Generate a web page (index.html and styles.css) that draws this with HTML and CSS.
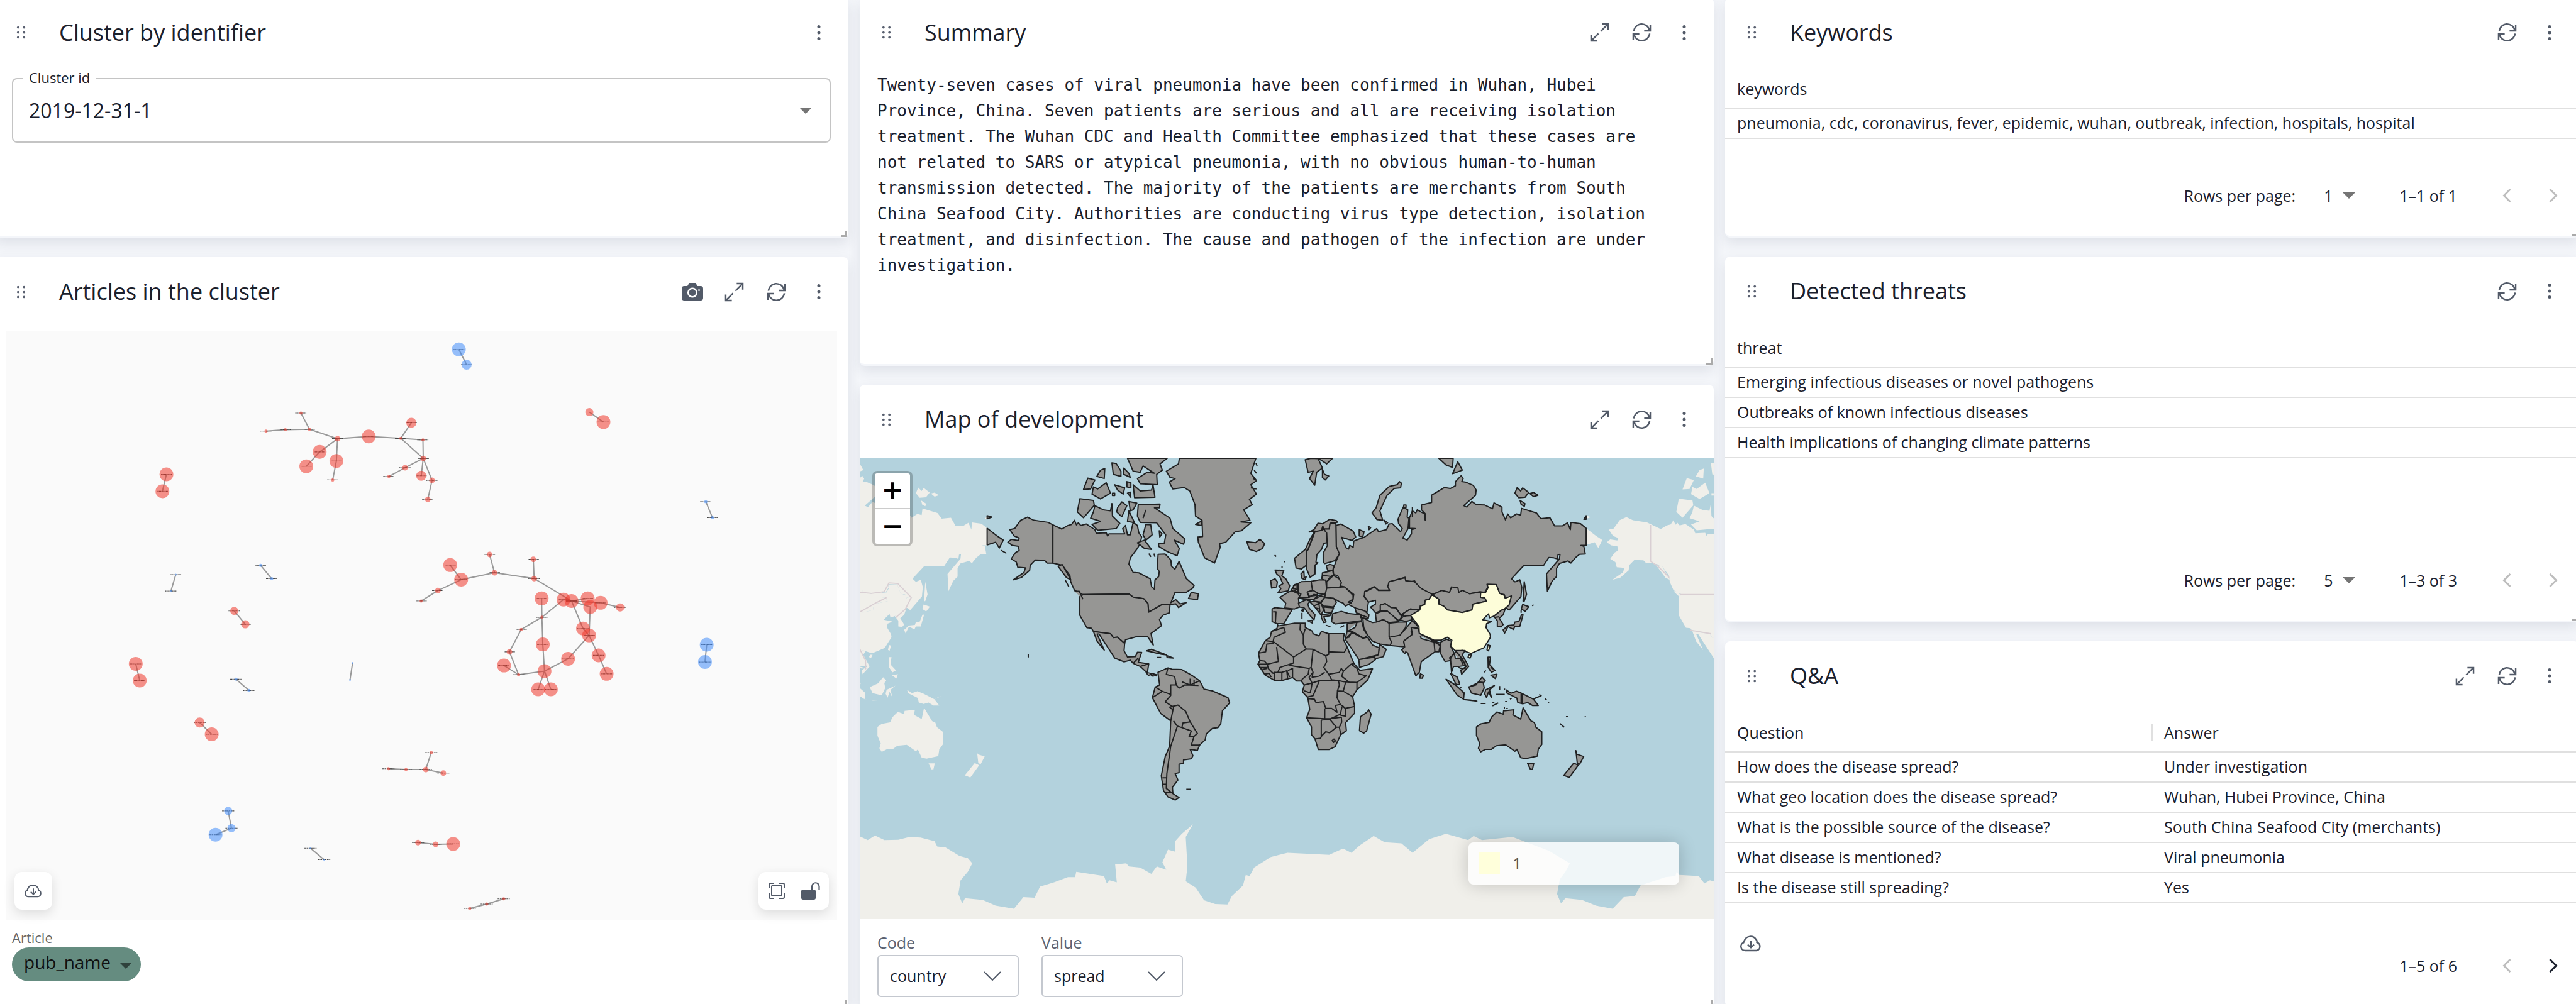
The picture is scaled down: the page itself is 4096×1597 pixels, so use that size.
FILE: index.html
```html
<!DOCTYPE html>
<html lang="en">
<head>
<meta charset="utf-8">
<title>Cluster dashboard</title>
<link rel="stylesheet" href="styles.css">
</head>
<body>
<svg class="sprite" aria-hidden="true">
  <symbol id="i-drag" viewBox="0 0 16 22"><g fill="currentColor"><circle cx="3" cy="2.500" r="2"/><circle cx="13" cy="2.500" r="2"/><circle cx="3" cy="11" r="2"/><circle cx="13" cy="11" r="2"/><circle cx="3" cy="19.500" r="2"/><circle cx="13" cy="19.500" r="2"/></g></symbol>
  <symbol id="i-more" viewBox="0 0 6 26"><g fill="currentColor"><circle cx="3" cy="3.500" r="2.500"/><circle cx="3" cy="13" r="2.500"/><circle cx="3" cy="22.500" r="2.500"/></g></symbol>
  <symbol id="i-expand" viewBox="0 0 32 32"><path d="M18 14 30 2M20 2h10v10M14 18 2 30M2 20v10h10" fill="none" stroke="currentColor" stroke-width="2.500"/></symbol>
  <symbol id="i-refresh" viewBox="0 0 32 32"><path d="M3 14A13 13 0 0 1 28.500 12M30 3v10.500H20M29 18A13 13 0 0 1 3.500 20M2 29V18.500h10" fill="none" stroke="currentColor" stroke-width="2.500"/></symbol>
  <symbol id="i-camera" viewBox="0 0 34 30"><path fill="currentColor" fill-rule="evenodd" d="M12 1h10l3 5h5q4 0 4 4v15q0 4-4 4H4q-4 0-4-4V10q0-4 4-4h5zM17 8.500a8 8 0 1 0 .01 0zM17 11a5.500 5.500 0 1 1-.01 0zM27.500 11a1.500 1.500 0 1 0 .01 0z"/></symbol>
  <symbol id="i-cloud" viewBox="0 0 34 28"><path d="M8 26a6.500 6.500 0 0 1-2.500-12.600A5 5 0 0 1 7 9.500 10 9 0 0 1 25 8a5 5 0 0 1 1.500 5A6.700 6.700 0 0 1 26 26zM17 10v11M12 16.500l5 5 5-5" fill="none" stroke="currentColor" stroke-width="2.400" stroke-linejoin="round"/></symbol>
  <symbol id="i-fit" viewBox="0 0 26 26"><path d="M1 9V3q0-2 2-2h6M17 1h6q2 0 2 2v6M25 17v6q0 2-2 2h-6M9 25H3q-2 0-2-2v-6M6 5h14q1 0 1 1v14q0 1-1 1H6q-1 0-1-1V6q0-1 1-1z" fill="none" stroke="currentColor" stroke-width="2"/></symbol>
  <symbol id="i-unlock" viewBox="0 0 30 28"><path fill="currentColor" d="M3 12h17q3 0 3 3v10q0 3-3 3H3q-3 0-3-3V15q0-3 3-3z"/><path d="M17 13V7a5.500 5.500 0 0 1 11.500 0v6" fill="none" stroke="currentColor" stroke-width="2.200"/></symbol>
  <symbol id="i-caret" viewBox="0 0 20 10"><path d="M0 0h20L10 10z" fill="currentColor"/></symbol>
  <symbol id="i-chev" viewBox="0 0 28 15"><path d="M1 1 14 14 27 1" fill="none" stroke="currentColor" stroke-width="2"/></symbol>
  <symbol id="i-prev" viewBox="0 0 14 22"><path d="M12.500 1 2.500 11l10 10" fill="none" stroke="currentColor" stroke-width="3"/></symbol>
  <symbol id="i-next" viewBox="0 0 14 22"><path d="M1.500 1l10 10-10 10" fill="none" stroke="currentColor" stroke-width="3"/></symbol>
  <symbol id="i-grip" viewBox="0 0 10 10"><path d="M9 0v9H0" fill="none" stroke="currentColor" stroke-width="4"/></symbol>
</svg>

<main class="board">
  <div class="column">
    <section class="card grow-s">
      <header class="card-head">
        <svg class="drag"><use href="#i-drag"/></svg>
        <h2>Cluster by identifier</h2>
        <button class="tool" aria-label="More"><svg class="i-more"><use href="#i-more"/></svg></button>
      </header>
      <div class="field-body">
        <div class="outlined">
          <label for="cluster">Cluster id</label>
          <select id="cluster"><option>2019-12-31-1</option></select>
          <svg class="caret"><use href="#i-caret"/></svg>
        </div>
      </div>
      <svg class="grip"><use href="#i-grip"/></svg>
    </section>

    <section class="card grow-xl">
      <header class="card-head">
        <svg class="drag"><use href="#i-drag"/></svg>
        <h2>Articles in the cluster</h2>
        <button class="tool" aria-label="Snapshot"><svg class="i-camera"><use href="#i-camera"/></svg></button>
        <button class="tool" aria-label="Expand"><svg class="i-32"><use href="#i-expand"/></svg></button>
        <button class="tool" aria-label="Refresh"><svg class="i-32"><use href="#i-refresh"/></svg></button>
        <button class="tool" aria-label="More"><svg class="i-more"><use href="#i-more"/></svg></button>
      </header>
      <div class="graph">
        <svg viewBox="10 564 1420 1008" role="img" aria-label="Article graph">
          <defs>
            <marker id="lab" markerUnits="userSpaceOnUse" markerWidth="44" markerHeight="8" refX="20" refY="3" viewBox="0 0 44 8"><path d="M0 3H40" class="tiny"/></marker>
            <marker id="lab2" markerUnits="userSpaceOnUse" markerWidth="24" markerHeight="8" refX="11" refY="3" viewBox="0 0 24 8"><path d="M0 3H22" class="tiny"/></marker>
          </defs>
          <g transform="translate(0 560) scale(.4847 .3954)">
            <path class="edge" d="M938,444L1006,438L1091,436L1190,477L1300,467L1413,475L1491,482L1492,562L1428,602L1371,640M1061,366L1091,436M1190,477L1127,534L1080,596M1190,477L1186,573L1173,655M1413,475L1450,408M1413,475L1492,562L1485,637M1492,562L1523,657L1508,739M587,631L573,704M620,1064L603,1135M919,1024L958,1082M826,1221L865,1279M479,1450L493,1522M1243,1446L1234,1519M832,1516L878,1565"/>
            <path class="node n5" d="M1127,534h0M1080,596h0M1300,467h0M1186,573h0M587,631h0M573,704h0M479,1450h0M493,1522h0"/>
            <path class="node n4" d="M1450,408h0M1485,637h0"/>
            <path class="node n3" d="M826,1221h0M865,1279h0"/>
            <path class="node n2" d="M1190,477h0M1492,562h0M1523,657h0M1508,739h0M1428,602h0"/>
            <path class="node n1" d="M938,444h0M1006,438h0M1091,436h0M1061,366h0M1173,655h0M1413,475h0M1491,482h0M1371,640h0"/>
            <path class="node n1 blue" d="M919,1024h0M958,1082h0M832,1516h0M878,1565h0"/>
            <path class="node n0 blue" d="M620,1064h0M603,1135h0M1243,1446h0M1234,1519h0"/>
          </g>
          <g transform="translate(700 560) scale(.4911 .3954)">
            <path class="edge" d="M171,91L198,157M625,362L674,405M1030,749L1053,818M1033,1367L1027,1442M141,1023L179,1086L295,1056L433,1081L563,1178M40,1178L98,1133L179,1086M278,977L295,1056M430,998L433,1081M459,1167L460,1248L463,1366L469,1481L447,1560M460,1248L535,1172L563,1178L619,1167M563,1178L664,1186L732,1206M563,1178L628,1204L624,1327M563,1178L603,1297L624,1327L551,1428L469,1481L379,1497L328,1457M379,1497L347,1398L388,1301L460,1248M624,1327L657,1413L685,1493M469,1481L491,1560"/>
            <path class="node n5" d="M141,1023h0M459,1167h0M535,1172h0M619,1167h0M463,1366h0M551,1428h0M328,1457h0M447,1560h0M603,1297h0M674,405h0"/>
            <path class="node n5" d="M179,1086h0M563,1178h0M664,1186h0M624,1327h0M469,1481h0M657,1413h0M491,1560h0"/>
            <path class="node n5" d="M628,1204h0M685,1493h0"/>
            <path class="node n3" d="M625,362h0M732,1206h0"/>
            <path class="node n2" d="M347,1398h0M98,1133h0M278,977h0M430,998h0M295,1056h0M433,1081h0"/>
            <path class="node n1" d="M40,1178h0M460,1248h0M388,1301h0M379,1497h0"/>
            <path class="node n5 blue" d="M171,91h0M1033,1367h0M1027,1442h0"/>
            <path class="node n4 blue" d="M198,157h0"/>
            <path class="node n1 blue" d="M1030,749h0M1053,818h0"/>
          </g>
          <g transform="translate(0 1130) scale(.9375 .3737)">
            <path class="edge wide" d="M364,277L386,331M708,488L740,492L776,492L786,414M776,492L808,508M416,681L422,760L393,790M566,852L591,904M762,826L794,834L826,832M856,1127L887,1107L918,1083"/>
            <path class="node n5" d="M386,331h0M826,832h0"/>
            <path class="node n4" d="M364,277h0"/>
            <path class="node n2" d="M776,492h0M808,508h0M762,826h0M794,834h0"/>
            <path class="node n1" d="M708,488h0M740,492h0M786,414h0M856,1127h0M887,1107h0M918,1083h0"/>
            <path class="node n5 blue" d="M393,790h0"/>
            <path class="node n3 blue" d="M416,681h0M422,760h0"/>
            <path class="node n0 blue" d="M566,852h0M591,904h0"/>
          </g>
        </svg>
        <div class="float left"><button aria-label="Download"><svg class="i-cloud-s"><use href="#i-cloud"/></svg></button></div>
        <div class="float right"><button aria-label="Fit"><svg class="i-fit"><use href="#i-fit"/></svg></button><button aria-label="Unlock"><svg class="i-unlock"><use href="#i-unlock"/></svg></button></div>
      </div>
      <div class="chip-field">
        <label for="article">Article</label>
        <div class="chip">
          <select id="article"><option>pub_name</option></select>
          <svg class="caret"><use href="#i-caret"/></svg>
        </div>
      </div>
      <svg class="grip"><use href="#i-grip"/></svg>
    </section>
  </div>

  <div class="column">
    <section class="card grow-m">
      <header class="card-head">
        <svg class="drag"><use href="#i-drag"/></svg>
        <h2>Summary</h2>
        <button class="tool" aria-label="Expand"><svg class="i-32"><use href="#i-expand"/></svg></button>
        <button class="tool" aria-label="Refresh"><svg class="i-32"><use href="#i-refresh"/></svg></button>
        <button class="tool" aria-label="More"><svg class="i-more"><use href="#i-more"/></svg></button>
      </header>
      <p class="summary">Twenty-seven cases of viral pneumonia have been confirmed in Wuhan, Hubei
Province, China. Seven patients are serious and all are receiving isolation
treatment. The Wuhan CDC and Health Committee emphasized that these cases are
not related to SARS or atypical pneumonia, with no obvious human-to-human
transmission detected. The majority of the patients are merchants from South
China Seafood City. Authorities are conducting virus type detection, isolation
treatment, and disinfection. The cause and pathogen of the infection are under
investigation.</p>
      <svg class="grip"><use href="#i-grip"/></svg>
    </section>

    <section class="card grow-l">
      <header class="card-head">
        <svg class="drag"><use href="#i-drag"/></svg>
        <h2>Map of development</h2>
        <button class="tool" aria-label="Expand"><svg class="i-32"><use href="#i-expand"/></svg></button>
        <button class="tool" aria-label="Refresh"><svg class="i-32"><use href="#i-refresh"/></svg></button>
        <button class="tool" aria-label="More"><svg class="i-more"><use href="#i-more"/></svg></button>
      </header>
      <div class="map">
        <svg viewBox="1470 784 1460 788" preserveAspectRatio="xMidYMid slice" role="img" aria-label="World map">
          <defs>
            <g id="world">
              <g transform="translate(1460 640) scale(.4847 .3571)">
                <path d="M702,722L685,710L635,700L612,685L588,700L567,740L550,745L565,775L583,785L580,797L555,792L543,805L558,820L580,825L583,845L570,855L555,885L573,900L578,925L605,928L600,950L562,985L590,975L620,940L622,915L640,890L672,892L682,905L702,905Z"/>
                <path d="M702,722L733,742L755,725L768,720L778,700L785,722L792,712L800,725L820,718L850,745L855,762L890,760L895,775L900,765L955,765L948,740L958,725L965,770L975,770L985,710L1000,725L1005,760L1015,780L1010,810L1000,835L975,880L970,910L985,950L1005,952L1045,980L1050,1018L1060,1030L1062,985L1075,970L1077,945L1070,930L1073,863L1098,862L1118,890L1120,920L1132,935L1147,897L1172,978L1200,1012L1195,1025L1170,1047L1132,1047L1118,1095L1135,1080L1150,1100L1172,1095L1145,1118L1135,1100L1115,1103L1088,1103L1040,1140L1037,1098L1022,1075L985,1068L970,1053L808,1056L778,1035L765,995L762,965L735,915L702,905Z"/>
                <path d="M808,1056L970,1053L985,1068L1022,1075L1037,1098L1040,1140L1088,1103L1115,1103L1113,1143L1090,1155L1078,1175L1085,1205L1048,1242L1056,1298L1035,1255L1003,1255L985,1262L958,1272L955,1290L930,1260L915,1262L905,1243L845,1233L838,1217L822,1215L797,1155V1065Z"/>
                <path d="M845,1233L905,1243L915,1262L930,1260L955,1290L953,1325L965,1355L993,1353L1000,1332L1015,1333L1008,1360L1003,1380L1040,1388L1035,1430L1070,1440L1055,1447L1030,1425L1010,1400L985,1385L975,1370L953,1378L920,1360L865,1245L858,1245L883,1322L858,1280ZM985,1385L1003,1360M1010,1400L1040,1388"/>
                <path d="M1190,1045L1215,1052L1212,1080L1180,1075ZM1032,1325L1050,1318L1103,1345L1085,1342ZM1103,1348L1127,1360L1105,1358ZM1068,1357h16M615,1340V1357M520,845l16,12zM720,920L735,912L765,985L750,975ZM745,985L758,1018M778,1040L795,1040L808,1078"/>
                <path d="M1003,625L1080,622L1078,640L1060,640L1115,690L1125,740L1168,790L1163,815L1130,795L1148,835L1140,870L1105,850L1075,825L1075,812L1095,810L1100,770L1068,712L1010,710L1000,680ZM850,630L880,650L905,655L910,620L912,680L938,715L925,740L860,748L840,720L870,705L835,690L845,660ZM797,597L845,605L848,628L810,688L788,660ZM930,640L945,612L963,630L945,683L927,660ZM970,610L998,618L985,650L975,655ZM970,655L990,712L965,705ZM1030,720L1047,722L1052,770L1030,795L1020,770ZM1000,808L1025,795L1050,840L1025,835ZM1030,650L1020,690M1077,750l10,15l-8,15zM1040,860l8,15M1058,860l4,15"/>
                <path d="M825,498L850,507L835,550L810,552ZM845,540L860,550L890,520L905,570L870,598L840,575ZM920,530L955,545L950,575L930,555ZM985,530L1010,560L1050,555L1055,530L1062,590L990,592ZM965,403H1105L1080,430L1088,460L1068,480L1070,530L1010,525L1000,500L1035,470L1060,475L1020,440L1010,470L985,465ZM910,425L925,428L942,465L942,490L915,480ZM870,460L885,452L883,500L857,490ZM952,450L970,475L975,495L952,480ZM963,515L977,520L977,545L963,540ZM965,570l10,-5l2,25zM912,570h8v12h-8z"/>
                <path d="M1148,403L1145,430L1102,465L1115,495L1133,500L1112,517L1125,550L1165,543L1185,560L1203,625L1205,680L1228,700L1230,778L1213,780L1215,805L1237,880L1272,905L1292,830L1290,812L1312,805L1345,755L1367,750L1400,712L1365,708L1397,700L1375,650L1405,625L1395,600L1420,575L1400,530L1420,510L1400,475L1418,403ZM1205,720L1225,705V725ZM1418,425l4,15M1412,460l8,15M1408,500l12,8M1400,545l20,5"/>
                <path d="M470,738L500,770L527,795L513,833L500,805L470,818ZM470,678L487,685L470,693Z"/>
              </g>
              <g transform="translate(2180 640) scale(.4911 .3571)">
                <path d="M230,718L272,752L281,780L268,797L232,782L240,810L249,835L256,838L260,820L272,830L274,800L292,790L310,782L354,740L360,755L388,745L397,718L408,716L437,755L443,740L430,715L428,695L446,637L462,650L460,685L466,690L463,740L445,785L460,795L475,765L475,745L488,740L468,738L468,688L478,655L490,665L495,650L510,662L522,670L520,695L524,700L524,670L510,650L510,627L545,615L545,580L590,543L610,548L628,535L628,515L648,487L655,500L650,515L665,518L690,533L700,555L698,580L657,630L668,637L685,610L700,625L730,627L757,645L762,617L790,637L790,660L802,698L810,670L820,688L840,670L855,675L858,643L910,665L925,692L957,688L973,727L1000,727L1018,712L1028,745L1030,710L1063,716L1083,738V820L1065,820L1075,825L1080,862L1060,863L1045,880L1030,905L1020,895L990,907L980,930V970L965,990L948,1040L945,957L990,885L992,863L985,865L983,885L970,880L953,878L934,918L865,918L823,980L835,995L852,985L859,1020L856,1065L815,1130L803,1118L812,1100L822,1067L800,1072L798,1056L782,1052L770,1008L738,1006L740,1022L730,1045L713,1042L676,1052L650,1038L637,1048L635,1025L615,1020L608,1045L580,1038L548,1055L535,1052L510,1032L504,1032L486,990L470,995L453,990V973L397,996V1035L360,1035L345,1018L318,1038L310,1065L325,1092L320,1140L300,1128L282,1122L255,1103L270,1087L274,1055L240,1018L228,1015L230,1000L218,965L204,960L202,935L210,905L223,862L213,825L212,725Z"/>
                <path d="M338,665L352,640L365,580L398,538L425,530L433,515L440,522L437,545L415,548L390,580L365,655L375,700L355,697ZM105,410L125,403L150,405L165,450L145,470L138,532L120,500L133,465L115,470ZM150,403H200L180,430ZM165,455L172,480L187,488L175,507L165,495ZM570,403H620L618,447L595,435ZM636,420L652,460L618,477ZM843,543L855,560L862,545L883,567L870,590L848,592L835,570ZM887,572L900,567L915,580L900,587ZM853,605L870,620L868,633L857,625ZM1083,678V695H1075ZM293,745L310,755L305,780L293,775ZM325,730L333,735L327,745ZM448,627h8v12h-8zM380,700l12,12l-6,6zM478,635V685"/>
              </g>
              <g transform="translate(2130 860) scale(.33333)">
                <path d="M250,285L305,240L330,185L355,145L325,150L350,138L370,105L395,108L430,85L465,92L470,100L432,105L428,135L400,135L395,120L388,142L350,155L320,240L312,245L312,320L285,340L258,335Z"/>
                <path d="M355,148L388,142L400,135L415,155L418,205L400,208L388,240L365,265L360,305L370,308L355,320L355,365L330,383L310,335L312,250L320,240Z"/>
                <path d="M400,135L428,135L432,108L462,105L464,225L480,262L458,297L405,312L397,305V258L418,220L415,155Z"/>
                <path d="M413,325L430,316L452,322L446,348L420,347ZM393,360L415,355L446,348L450,372L435,378L392,372ZM392,372L435,378L415,405L390,390Z"/>
                <path d="M415,405L450,373L478,390L490,410L482,432L415,438ZM335,403L380,395L410,397L415,450L405,470L370,465L342,450ZM268,415L285,405L335,403L342,450L315,458L325,485L280,490L268,465ZM283,365L298,350L300,385L310,380L305,395L288,388ZM232,450L250,420L268,415L265,465ZM245,425l18,-5v25l-20,-5zM175,485L220,458L245,448L283,468L270,490L275,535L250,545L200,540L205,515Z"/>
                <path d="M135,545L150,538L238,548L195,620L160,620L135,610ZM140,560L155,560L152,612M270,515L310,498L330,505L318,520L325,540L355,575L350,600L335,585L300,540L275,535ZM318,605L342,603L340,617ZM288,565V595M285,552l10,-5l-2,12z"/>
                <path d="M275,490L325,485L350,470L370,475L350,495L310,498ZM315,458L345,450L370,465L360,475L325,480ZM350,495L385,478L405,485L385,510L350,505ZM370,475L405,470V485L385,478ZM385,515L405,485L450,490L465,510L450,535L400,530ZM400,535L450,540L440,565L405,562ZM330,510L350,505L385,515L400,550L385,575L350,530ZM350,530L375,515L380,560M360,540l20,5M388,575L440,568L432,580L400,585L412,612L400,615L388,590ZM410,628l24,8M485,640l20,-10"/>
                <path d="M415,438L508,432L550,475L550,495L525,510L540,515L510,530L500,515L480,508L450,490L405,485L410,460ZM150,345L195,347L185,375L205,390L225,425L218,452L165,462L180,440L170,428L190,415L175,380L158,365ZM128,400L150,390L162,405L158,432L132,438ZM5,200L50,205L72,187L97,210L85,235L55,250L20,240L12,220ZM148,268l8,8M198,298v8M186,325v10"/>
                <path d="M445,570L490,557L525,568L590,575L595,605L520,615L460,622L440,610ZM560,540L610,555L632,575L628,595L590,590L585,570L567,565ZM590,575L630,590"/>
                <path d="M628,450L660,432L680,450L738,450L728,430L735,405L817,385L820,400L865,405L900,440L957,470L940,495L920,500L918,522L895,530L893,550L845,545L805,570L795,575L770,540L745,538L715,517L690,525L690,555L665,565L640,535L665,520V500L630,510L608,480L610,455Z"/>
                <path d="M665,570L690,560L725,555L760,585L785,610L735,615L705,600L670,612ZM690,555V525L715,517L745,538L770,540L800,585L785,605L760,585L725,555ZM805,570L845,545L893,550L850,578L810,582ZM790,600L810,582L850,578L853,600L820,610ZM795,575l25,10"/>
                <path d="M600,590L650,615L670,612L705,600L735,618V690L748,715L740,732L690,725L650,710L625,680L605,640ZM735,618L785,612L825,612L820,640L790,680L735,690ZM735,690L790,680L825,640L853,605L885,635L848,660L855,675L810,710L815,740L740,732L748,715Z"/>
                <path d="M520,620L595,610L605,650L625,680L605,695L545,660L520,660ZM520,660L560,640L570,615M510,695L520,660L545,660L530,690ZM510,700L545,665L600,695L625,690L650,730L685,745L680,780L620,795L580,805L550,760ZM685,725L720,752L705,790L665,800L655,790L680,780ZM580,805L660,792L665,805L630,830L583,845Z"/>
                <path d="M885,645L890,670L965,710L1000,720L990,765L970,765L900,815L890,870L872,888L830,770L820,765L815,775L800,755L815,740L810,710L855,675L848,640ZM890,670L965,705L1000,705L1033,690M895,685L900,697L965,715L990,725M965,712L1000,735L990,765L970,765ZM895,878L912,885L905,900L893,900Z"/>
                <path d="M957,472L1005,450L1045,460L1055,432L1088,437L1092,460L1112,450L1147,467L1205,458V485L1225,487L1235,505L1165,520L1160,550L1110,563L1035,550L990,520V495Z"/>
                <path class="china" d="M955,472L990,495V520L1015,530L1035,550L1110,563L1160,550L1165,520L1235,505L1225,487L1203,485L1205,462L1230,460L1243,435L1238,420L1285,420L1302,465L1327,475L1330,490L1362,478L1350,525L1290,575L1250,590L1245,570L1215,600L1260,610L1235,620L1232,640L1253,675L1255,690L1220,745L1155,773L1110,757L1080,765L1050,735L1057,705L1033,690L1000,705L965,705L890,670L888,635L845,578L893,550L895,530L918,522L920,500L940,495ZM1242,730L1253,733L1245,760L1237,755ZM1145,780L1158,780L1150,797L1140,792Z"/>
                <path d="M163,625L165,632L250,618L305,618V640L340,658L345,672L375,683L388,660L425,672L505,672L500,700L520,740L540,790L555,825L585,860L650,852L625,910L570,960L548,995L558,1045V1080L512,1128L516,1170L487,1190L458,1252L428,1266L372,1266L355,1212L337,1190V1150L312,1103L328,1060L318,1000L290,970L300,935L285,915L262,915L240,897L185,912L148,912L100,885L62,828L72,810L65,772L100,708L125,690L132,660L160,645Z"/>
                <path class="border" d="M132,660L195,640L203,665L145,690L140,712L105,708M140,712V722L108,725L102,765L65,772M145,715L245,792L310,750L295,725V680L278,650L280,620M295,680L305,645M245,792V822L175,845L165,868M158,740L167,815L110,828L95,812L72,810M310,750L345,752L335,845L325,850L245,838L220,832M345,752L410,785L425,778V672M425,765L505,768L520,740M410,785L415,815L400,845L425,880L440,908L475,912M62,828L110,828L115,850L140,875L148,870V912M68,845H110M85,855L110,850M95,880L120,875L130,895M148,870L185,870V912M185,870L210,862L215,905M210,862L225,895M215,862L240,850V897M335,845L345,870L325,895L340,925L300,935M325,850L320,880L290,905L285,915M345,870L340,895L375,890L405,870M425,880L480,870L490,850L500,865L540,828L555,825M500,865L492,890L530,920L570,922L618,888L580,878L570,850L540,828M475,912L500,918L530,920M570,922V960M340,925L378,912L475,912L480,935L470,965L500,967L512,920M378,912L345,990L315,997M340,925L335,955L330,975L300,965M500,967L548,995M470,965L468,1000L485,1035L510,1055L558,1045M485,1035L460,1040L468,1075L440,1055L410,1055L398,1020L360,1025L352,1008L318,1005M405,1055V1108L312,1103M405,1108L435,1108L485,1085L495,1040L510,1055L512,1095L485,1090M387,1115L430,1110L465,1152L430,1180L410,1175L390,1195L383,1208L355,1212M387,1115V1200M435,1108L490,1100L492,1125L480,1152L487,1190M465,1152H480M443,1220L452,1212L460,1222L450,1230Z"/>
                <path d="M588,1098L625,1072L630,1062L643,1085L620,1170L605,1182L583,1170Z"/>
              </g>
              <g transform="translate(2430 920) scale(.33333)">
                <path d="M372,402L412,370L430,365L420,395L400,412L420,445L410,457L390,455V425ZM378,408L400,405M520,342L552,353L533,377L513,365ZM515,392L522,395L505,455L480,455L472,470L445,455L427,490L420,472L445,450L475,447L480,432L500,430ZM512,370v15M568,348l8,-4M528,225L540,290L528,325L522,325Z"/>
                <path d="M100,535L130,520L155,530L150,555L170,595L145,615L150,630L122,635L97,590ZM165,595L180,585L210,620L228,655L190,660L165,660L155,690L150,620ZM175,578L225,578L210,600L243,660L207,700L203,680L230,660L205,615ZM170,595L175,620L200,620L215,650M190,660L200,670L228,670M150,695L185,715L197,750L180,755Z"/>
                <path d="M127,725L175,755L220,795L217,828L185,808ZM217,830L285,838L250,832ZM305,850h25M365,862l30,-15M365,845h10M430,840h12M455,828l8,-5M243,765L280,755L312,715L328,732L318,745L323,770L305,808L258,797ZM245,765L300,740L318,742M330,780L375,758L350,780L360,820L345,790L335,820L325,800ZM342,612L355,612L350,650L378,680L360,690L343,665ZM357,705L388,700L380,722ZM323,690l8,-10M355,665l18,10M402,760v20M383,803h45M427,773v8M210,790l8,4M198,768h8"/>
                <path d="M435,780L460,797L488,787L520,800L575,828L600,860L570,860L545,845L520,852L495,845L490,822L440,797ZM512,798V850M518,798V850M575,828L615,810L590,820ZM605,803l10,8M635,826l8,6M652,845h4M742,918h10M838,918h6M712,953L733,972"/>
                <path d="M283,970L305,955L348,947L360,920L388,893L420,905L422,888L475,882L470,908L510,930L522,872L563,940L580,948L588,972L618,995V1060L600,1085L595,1120L535,1133L510,1128L490,1085L480,1095L433,1062L385,1067L360,1085L330,1085L305,1098L293,1080L300,1055L283,1015ZM545,1157L577,1157L570,1188L560,1188ZM793,1092L797,1110L833,1122L812,1162L800,1155ZM426,868v10M436,876h8"/>
              </g>
              <g transform="translate(1460 1150) scale(.9503 .361)">
                <path d="M1295,430L1303,440L1287,498L1277,488ZM565,-21L572,-15L590,-13L610,18L622,40L630,80L645,88L673,120L676,145L663,182L660,245L655,262L645,265L634,292L632,320L622,345L618,370L605,365L610,395L607,410L593,415V432L585,435V475L578,480L583,510L573,545L574,575L585,593L578,605L565,590L557,560L553,490L560,400L568,350L570,230L552,195L537,120L542,70L550,60L547,0ZM598,554h8M525,0L530,15L538,5L545,18"/>
                <path class="border" d="M570,230L575,165L560,140L570,110V60L580,60L585,75L595,60L620,62M565,-21L562,10L577,20L580,60M622,40L605,60V30M612,35V60M590,45L605,60M542,70L555,90L570,105M537,120L555,90M575,180L568,165L583,155L597,185L605,235L592,240L590,262L582,255L575,230M590,262L607,278L603,305L612,303L618,290L605,235M612,303L607,345L622,345M582,255L570,350L563,480L562,550L574,575M555,500h8M555,530h8M560,570h12"/>
              </g>
            </g>
          </defs>
          <rect class="sea" x="1470" y="784" width="1460" height="788"/>
          <g transform="translate(1460 1150) scale(.9503 .361)"><path class="ice" d="M5,770L25,795L38,773L55,795L80,793L100,780L120,783L145,800L150,825L165,830L190,870L205,880L213,905L205,945L192,985L188,1050L195,1095L200,1070L232,1078L255,1105L288,1120L305,1065L325,1068L335,1015L360,995L385,970L398,970L400,945L450,965L455,1000L460,985L473,995L470,910L490,905L495,920L515,925L535,955L545,920L562,935L555,900L565,840L578,850V800L590,765L610,720L597,780L600,920L597,990L615,1020L630,1080L650,1098L672,1100L680,1060L700,1010L705,960L712,965L720,925L750,875L780,855L855,865L880,835L895,855L910,820L935,775L955,805L985,810L1005,855L1035,790L1065,765L1105,795L1115,775L1130,795L1185,780L1215,810L1250,845L1288,905L1280,945L1270,980L1265,1050L1272,1095L1280,1070L1310,1078L1335,1105L1365,1120L1385,1065L1405,1060L1415,1010L1460,970L1478,965L1480,945L1485,960L1520,965L1530,1000L1540,985L1560,1000V1180H0Z"/></g>
          <use class="base" href="#world" x="-1024"/>
          <use class="base" href="#world" x="1024"/>
          <path class="frontier" d="M2822 898V960L2834 968L2854 988M2873 1017H2930M2890 1078L2925 1084M1470 1013L1490 1015L1512 1012L1520 997L1535 998L1558 1022L1548 1042L1532 1056M1470 1047L1500 1030L1516 1022M1470 1110L1480 1130V1145"/>
          <use class="countries" href="#world"/>
        </svg>
        <div class="zoom"><button aria-label="Zoom in">+</button><button aria-label="Zoom out">−</button></div>
        <div class="legend"><span class="swatch"></span>1</div>
      </div>
      <div class="map-controls">
        <div class="pick"><label for="code">Code</label><div class="box"><select id="code"><option>country</option></select><svg><use href="#i-chev"/></svg></div></div>
        <div class="pick"><label for="value">Value</label><div class="box"><select id="value"><option>spread</option></select><svg><use href="#i-chev"/></svg></div></div>
      </div>
      <svg class="grip"><use href="#i-grip"/></svg>
    </section>
  </div>

  <div class="column">
    <section class="card grow-s">
      <header class="card-head">
        <svg class="drag"><use href="#i-drag"/></svg>
        <h2>Keywords</h2>
        <button class="tool" aria-label="Refresh"><svg class="i-32"><use href="#i-refresh"/></svg></button>
        <button class="tool" aria-label="More"><svg class="i-more"><use href="#i-more"/></svg></button>
      </header>
      <table>
        <thead><tr><th>keywords</th></tr></thead>
        <tbody><tr><td>pneumonia, cdc, coronavirus, fever, epidemic, wuhan, outbreak, infection, hospitals, hospital</td></tr></tbody>
      </table>
      <footer class="pager">
        <label for="rows1">Rows per page:</label>
        <div class="rows"><select id="rows1"><option>1</option></select><svg class="caret"><use href="#i-caret"/></svg></div>
        <span class="range">1–1 of 1</span>
        <button disabled aria-label="Previous page"><svg><use href="#i-prev"/></svg></button>
        <button disabled aria-label="Next page"><svg><use href="#i-next"/></svg></button>
      </footer>
      <svg class="grip"><use href="#i-grip"/></svg>
    </section>

    <section class="card grow-m2">
      <header class="card-head">
        <svg class="drag"><use href="#i-drag"/></svg>
        <h2>Detected threats</h2>
        <button class="tool" aria-label="Refresh"><svg class="i-32"><use href="#i-refresh"/></svg></button>
        <button class="tool" aria-label="More"><svg class="i-more"><use href="#i-more"/></svg></button>
      </header>
      <table>
        <thead><tr><th>threat</th></tr></thead>
        <tbody>
          <tr><td>Emerging infectious diseases or novel pathogens</td></tr>
          <tr><td>Outbreaks of known infectious diseases</td></tr>
          <tr><td>Health implications of changing climate patterns</td></tr>
        </tbody>
      </table>
      <footer class="pager">
        <label for="rows2">Rows per page:</label>
        <div class="rows"><select id="rows2"><option>5</option></select><svg class="caret"><use href="#i-caret"/></svg></div>
        <span class="range">1–3 of 3</span>
        <button disabled aria-label="Previous page"><svg><use href="#i-prev"/></svg></button>
        <button disabled aria-label="Next page"><svg><use href="#i-next"/></svg></button>
      </footer>
      <svg class="grip"><use href="#i-grip"/></svg>
    </section>

    <section class="card grow-m2">
      <header class="card-head">
        <svg class="drag"><use href="#i-drag"/></svg>
        <h2>Q&amp;A</h2>
        <button class="tool" aria-label="Expand"><svg class="i-32"><use href="#i-expand"/></svg></button>
        <button class="tool" aria-label="Refresh"><svg class="i-32"><use href="#i-refresh"/></svg></button>
        <button class="tool" aria-label="More"><svg class="i-more"><use href="#i-more"/></svg></button>
      </header>
      <table class="two">
        <thead><tr><th><span class="divided">Question</span></th><th>Answer</th></tr></thead>
        <tbody>
          <tr><td>How does the disease spread?</td><td>Under investigation</td></tr>
          <tr><td>What geo location does the disease spread?</td><td>Wuhan, Hubei Province, China</td></tr>
          <tr><td>What is the possible source of the disease?</td><td>South China Seafood City (merchants)</td></tr>
          <tr><td>What disease is mentioned?</td><td>Viral pneumonia</td></tr>
          <tr><td>Is the disease still spreading?</td><td>Yes</td></tr>
        </tbody>
      </table>
      <footer class="pager">
        <button class="save" aria-label="Download"><svg><use href="#i-cloud"/></svg></button>
        <span class="range">1–5 of 6</span>
        <button disabled aria-label="Previous page"><svg><use href="#i-prev"/></svg></button>
        <button aria-label="Next page"><svg><use href="#i-next"/></svg></button>
      </footer>
      <svg class="grip"><use href="#i-grip"/></svg>
    </section>
  </div>
</main>
</body>
</html>
```
FILE: styles.css
```css
* { box-sizing: border-box; }
body {
  margin: 0;
  overflow: hidden;
  background: #f4f6fa;
  color: #1a202c;
  font: 25px/40px "Open Sans", "Noto Sans", sans-serif;
}
h2, p { margin: 0; font-weight: 400; }
button { padding: 0; border: 0; background: none; color: inherit; font: inherit; }
select { appearance: none; border: 0; background: none; color: inherit; font: inherit; padding: 0; }
svg { display: block; }
.sprite { position: absolute; width: 0; height: 0; }

/* board: three columns that bleed slightly past the window */
.board {
  display: grid;
  grid-template-columns: repeat(3, minmax(0, 1fr));
  gap: 18px;
  margin: -4px -5px -5px -9px;
  min-height: calc(100vh + 9px);
}
.column { display: flex; flex-direction: column; gap: 30px; }
.card {
  position: relative;
  display: flex;
  flex-direction: column;
  background: #fff;
  border-radius: 8px;
  border-bottom: 3px solid #f4f6fa;
  box-shadow: 0 8px 20px rgba(40, 50, 80, .1);
}
.grow-s { flex: 381 1 0; }
.grow-m { flex: 585 1 0; }
.grow-m2 { flex: 583 1 0; }
.grow-l { flex: 991 1 0; }
.grow-xl { flex: 1195 1 0; }
.grip { position: absolute; right: 2px; bottom: -1px; width: 10px; height: 10px; color: #aaa; }

.card-head { display: flex; align-items: center; height: 117px; padding: 0 14px 6px 35px; flex: none; }
.card-head .drag { width: 15px; height: 21px; margin-right: 53px; color: #596070; flex: none; }
.card-head h2 { flex: 1; font-size: 36px; line-height: 48px; }
.tool { display: grid; place-items: center; width: 67px; height: 67px; color: #525a68; }
.i-more { width: 6px; height: 26px; }
.i-32 { width: 31px; height: 31px; }
.i-camera { width: 34px; height: 30px; }

.caret { width: 20px; height: 10px; color: #757575; pointer-events: none; }

/* outlined select */
.field-body { padding: 11px 28px; }
.outlined { position: relative; display: grid; align-items: center; height: 103px; border: 2px solid #c4c4c4; border-radius: 8px; }
.outlined label { position: absolute; left: 15px; top: -19px; padding: 0 10px; background: #fff; font-size: 22px; line-height: 32px; }
.outlined select { grid-area: 1 / 1; width: 100%; height: 100%; padding: 0 25px; font-size: 32px; }
.outlined .caret { grid-area: 1 / 1; justify-self: end; margin-right: 28px; }

/* article graph */
.graph { position: relative; margin: 0 18px; background: #fafafa; }
.graph > svg { width: 100%; height: auto; }
.edge { fill: none; stroke: #999; stroke-width: 2px; vector-effect: non-scaling-stroke; marker: url(#lab); }
.edge.wide { marker: url(#lab2); }
.tiny { fill: none; stroke: #444; stroke-width: 3px; stroke-dasharray: 3 1; }
.node { fill: none; stroke: #ef3729; stroke-opacity: .55; stroke-linecap: round; vector-effect: non-scaling-stroke; }
.blue { stroke: #418dfa; }
.n0 { stroke-width: 3px; }
.n1 { stroke-width: 5px; }
.n2 { stroke-width: 9px; }
.n3 { stroke-width: 13px; }
.n4 { stroke-width: 16px; }
.n5 { stroke-width: 22px; }
.float { position: absolute; bottom: 17px; display: flex; height: 60px; background: #fff; border-radius: 12px; box-shadow: 0 6px 18px rgba(0, 0, 0, .12); color: #525a68; }
.float.left { left: 14px; }
.float.right { right: 13px; padding: 0 2px; }
.float button { display: grid; place-items: center; width: 54px; }
.float.left button { width: 60px; }
.i-cloud-s { width: 28px; height: 23px; }
.i-fit { width: 26px; height: 26px; }
.i-unlock { width: 30px; height: 28px; }
.chip-field { display: flex; flex-direction: column; align-items: flex-start; padding: 12px 28px; }
.chip-field label { color: #666; font-size: 22px; line-height: 31px; }
.chip { display: grid; align-items: center; width: 205px; height: 54px; border-radius: 27px; background: #658c80; color: #111; }
.chip select { grid-area: 1 / 1; width: 100%; height: 46px; padding: 0 19px; font-size: 28px; align-self: start; }
.chip .caret { grid-area: 1 / 1; justify-self: end; margin: 4px 14px 0 0; color: #2f423c; }

.summary { padding: 2px 28px; font: 26px/41px "DejaVu Sans Mono", monospace; white-space: pre-wrap; }

/* choropleth */
.map { position: relative; overflow: hidden; flex: none; }
.map > svg { width: 100%; height: auto; }
.sea { fill: #b3d2dd; }
.ice { fill: #f0efea; }
.base { --reported: #f0efea; fill: #f0efea; stroke: none; }
.frontier { fill: none; stroke: #d9cfd3; stroke-width: 2px; }
.countries { --reported: #fdfdd9; fill: #969694; stroke: #202122; stroke-width: 2px; stroke-linejoin: round; }
#world path { vector-effect: non-scaling-stroke; }
#world .border { fill: none; }
#world .china { fill: var(--reported); }
.zoom { position: absolute; left: 20px; top: 20px; display: flex; flex-direction: column; gap: 2px; background: #ccc; background-clip: padding-box; border: 4px solid rgba(0, 0, 0, .22); border-radius: 8px; }
.zoom button { width: 56px; height: 55px; background: #fff; color: #000; font: 700 42px/52px "DejaVu Sans", sans-serif; }
.zoom button:first-child { border-radius: 4px 4px 0 0; }
.zoom button:last-child { border-radius: 0 0 4px 4px; }
.legend { position: absolute; right: 55px; bottom: 55px; display: flex; align-items: center; gap: 20px; width: 335px; height: 67px; padding: 0 16px; border-radius: 8px; background: rgba(255, 255, 255, .8); box-shadow: 0 0 28px rgba(0, 0, 0, .2); color: #555; }
.swatch { width: 34px; height: 34px; background: #ffffdb; }
.map-controls { display: flex; gap: 36px; padding: 17px 28px 0; }
.pick label { display: block; color: #5b6270; }
.box { display: grid; align-items: center; width: 225px; height: 67px; border: 2px solid #c4c8cf; border-radius: 6px; }
.box select { grid-area: 1 / 1; width: 100%; height: 100%; padding: 0 18px; }
.box svg { grid-area: 1 / 1; justify-self: end; width: 28px; height: 15px; margin-right: 26px; color: #525a68; pointer-events: none; }

/* tables */
table { width: 100%; border-collapse: collapse; }
th, td { padding: 0 19px 2px; text-align: left; font-weight: 400; height: 48px; line-height: 40px; border-bottom: 2px solid #e0e0e0; }
th { height: 59px; }
.two { table-layout: fixed; }
.divided { display: block; height: 28px; line-height: 28px; margin-right: -20px; border-right: 2px solid #e0e0e0; }
.pager { display: flex; align-items: center; justify-content: flex-end; height: 97px; margin-top: auto; margin-bottom: 15px; padding-right: 4px; }
.rows { display: grid; align-items: center; width: 50px; margin: 0 70px 0 45px; }
.rows select { grid-area: 1 / 1; width: 100%; }
.rows .caret { grid-area: 1 / 1; justify-self: end; }
.pager button { display: grid; place-items: center; width: 74px; height: 74px; }
.pager button svg { width: 14px; height: 22px; }
.pager button:disabled { color: #bdbdbd; }
.range { margin-right: 42px; }
.pager .save { margin: 0 auto 72px 4px; color: #525a68; }
.pager .save svg { width: 34px; height: 28px; }
```
